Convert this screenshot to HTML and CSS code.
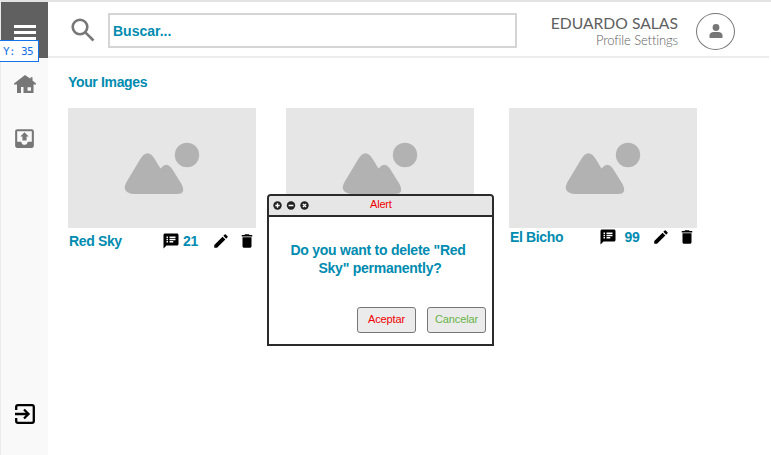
FILE: index.html
```html
<!DOCTYPE html>
<html lang="es">
<head>
<meta charset="utf-8">
<title>Your Images</title>
<link rel="stylesheet" href="styles.css">
</head>
<body>
<svg class="defs" aria-hidden="true">
  <symbol id="notes" viewBox="0 0 24 24"><path d="M20 2H4c-1.100 0-2 .9-2 2v18l4-4h14c1.100 0 2-.9 2-2V4c0-1.100-.9-2-2-2zM8 14H6v-2h2zm0-3H6V9h2zm0-3H6V6h2zm7 6h-5v-2h5zm3-3h-8V9h8zm0-3h-8V6h8z"/></symbol>
  <symbol id="edit" viewBox="0 0 24 24"><path d="M3 17.250V21h3.750L17.810 9.940l-3.750-3.750zM20.710 7.040a1 1 0 0 0 0-1.410l-2.340-2.340a1 1 0 0 0-1.410 0l-1.830 1.830 3.750 3.750z"/></symbol>
  <symbol id="trash" viewBox="0 0 24 24"><path d="M6 19c0 1.100.9 2 2 2h8c1.100 0 2-.9 2-2V7H6zM19 4h-3.500l-1-1h-5l-1 1H5v2h14z"/></symbol>
  <symbol id="photo" viewBox="0 0 188 120"><path d="M58.500 74L72 51.500Q79.500 39 87 51.500L92.500 60.500Q98 53.500 103.500 60L113.500 76Q118.500 86 109 86H65Q53 84 58.500 74Z"/><circle cx="119" cy="47" r="12.200"/></symbol>
</svg>
<div class="app">
  <aside class="sidebar">
    <button class="menu" aria-label="Menu"><i></i><i></i><i></i></button>
    <span class="tip">Y: 35</span>
    <svg class="home" viewBox="0 0 22 18"><path d="M11 0L16.500 3.800V2.200H18.500V5.400L22 8.500V9.500H19.500V18H9.500V12H7V18H3V9.500H0V8.500ZM13.500 12.300V15.700H17V12.300Z" fill-rule="evenodd"/></svg>
    <svg class="upload" viewBox="0 0 24 24"><path d="M16 10l-4-4-4 4h2v4h4v-4h2zm3-7H5c-1.100 0-2 .9-2 2v14c0 1.100.9 2 2 2h14c1.100 0 2-.9 2-2V5c0-1.100-.9-2-2-2zm0 12h-4c0 1.660-1.340 3-3 3s-3-1.340-3-3H5V5h14z"/></svg>
    <svg class="exit" viewBox="0 0 20 20"><path d="M1.200 6V3Q1.200 1.200 3 1.200H17Q18.800 1.200 18.800 3V17Q18.800 18.800 17 18.800H3Q1.200 18.800 1.200 17V14M0 10H13M9 5.500L13.500 10L9 14.500"/></svg>
  </aside>
  <div class="page">
    <header class="header">
      <svg class="search-icon" viewBox="0 0 24 24"><circle cx="9" cy="9" r="7.300"/><path d="M14.300 14.300L22.500 22.500"/></svg>
      <div class="search">Buscar...</div>
      <div class="profile"><span class="name">EDUARDO SALAS</span><span class="settings">Profile Settings</span></div>
      <div class="avatar"><svg viewBox="0 0 14 14"><circle cx="7" cy="3.500" r="3.400"/><path d="M.5 14V11.500Q.5 8.500 4 8H10Q13.500 8.500 13.500 11.500V14Z"/></svg></div>
    </header>
    <main>
      <h1>Your Images</h1>
      <div class="gallery">
        <article class="card">
          <svg class="photo"><use href="#photo"/></svg>
          <div class="info"><b class="title">Red Sky</b><svg class="ico"><use href="#notes"/></svg><b class="count">21</b><svg class="ico"><use href="#edit"/></svg><svg class="ico"><use href="#trash"/></svg></div>
        </article>
        <article class="card"><svg class="photo"><use href="#photo"/></svg></article>
        <article class="card wide">
          <svg class="photo"><use href="#photo"/></svg>
          <div class="info"><b class="title">El Bicho</b><svg class="ico"><use href="#notes"/></svg><b class="count">99</b><svg class="ico"><use href="#edit"/></svg><svg class="ico"><use href="#trash"/></svg></div>
        </article>
      </div>
    </main>
  </div>
</div>
<div class="dialog">
  <div class="titlebar">
    <svg class="controls" viewBox="0 0 36 9"><g class="disc"><circle cx="4.500" cy="4.500" r="4.200"/><circle cx="18" cy="4.500" r="4.200"/><circle cx="31.500" cy="4.500" r="4.200"/></g><path d="M2.300 4.500h4.400M4.500 2.300v4.400M15.600 4.500h4.800M29.900 2.900l3.200 3.200M33.100 2.900l-3.200 3.200"/></svg>
    <span>Alert</span>
  </div>
  <p>Do you want to delete "Red<br><span class="second">Sky" permanently?</span></p>
  <div class="actions"><button class="accept">Aceptar</button><button class="cancel">Cancelar</button></div>
</div>
</body>
</html>
```

FILE: styles.css
```css
* { box-sizing: border-box; }
body { margin: 0; background: #fff; font-family: "Liberation Sans", Arial, sans-serif; overflow: hidden; }
svg { display: block; flex: none; }
.defs { position: absolute; width: 0; height: 0; }
.app { display: flex; height: 455px; border-top: 2px solid #e3e3e3; border-left: 1px solid #ebebeb; }
.sidebar { position: relative; width: 47px; background: #f9f9f9; display: flex; flex-direction: column; align-items: center; flex: none; }
.menu { width: 47px; height: 56px; border: 0; padding: 4px 0 0; background: #606060; display: flex; flex-direction: column; align-items: center; justify-content: center; gap: 3px; flex: none; }
.menu i { width: 22px; height: 3px; background: #fff; }
.tip { position: absolute; left: -2px; top: 38px; width: 40px; height: 22px; border: 1px solid #1473e6; background: #fff; color: #1473e6; font: 11px/21px "DejaVu Sans Mono", monospace; letter-spacing: -.6px; padding-left: 3px; white-space: pre; }
.home { width: 22px; height: 18px; margin-top: 17px; fill: #777; }
.upload { width: 25px; height: 25px; margin-top: 33px; fill: #777; }
.exit { width: 20px; height: 20px; margin: auto 0 31px; fill: none; stroke: #000; stroke-width: 2.300; }
.page { flex: 1; }
.header { height: 56px; margin-right: 2px; border-bottom: 2px solid #ededed; display: flex; align-items: center; }
.search-icon { width: 24px; height: 24px; margin: 2px 0 0 23px; fill: none; stroke: #777; stroke-width: 2.600; }
.search { width: 409px; height: 35px; margin: 3px 0 0 13px; border: 2px solid #d5d5d5; padding-left: 3px; color: #008bb0; font-size: 14px; font-weight: bold; line-height: 32px; }
.profile { width: 161px; display: flex; flex-direction: column; align-items: flex-end; font-family: Lato, sans-serif; color: #606060; margin-top: 4px; }
.name { font-size: 15.700px; line-height: 17px; }
.settings { font-size: 13px; line-height: 16px; font-weight: 300; letter-spacing: -.12px; }
.avatar { width: 39px; height: 37px; margin: 4px 0 0 18px; border: 1px solid #777; border-radius: 50%; display: grid; place-items: center; }
.avatar svg { width: 14px; height: 14px; fill: #777; }
main { padding: 15px 0 0 20px; }
h1 { margin: 0; color: #008bb0; font-size: 14px; line-height: 18px; letter-spacing: -.35px; }
.gallery { display: flex; gap: 29.500px; margin-top: 17px; }
.card { width: 188px; }
.wide { margin-left: 6px; }
.photo { width: 188px; height: 120px; background: #e6e6e6; fill: #b2b2b2; }
.info { display: flex; align-items: center; height: 26px; color: #008bb0; font-size: 14px; }
.title { width: 94px; padding-left: 1px; letter-spacing: -.35px; }
.ico { width: 18px; height: 18px; fill: #000; }
.count { width: 32px; padding-left: 3px; letter-spacing: -.2px; }
.info .ico:nth-child(5) { margin-left: 7.500px; }
.wide .info { height: 18px; }
.wide .title { width: 89.500px; }
.wide .count { width: 35.500px; padding-left: 8px; }
.dialog { position: absolute; left: 267px; top: 194px; width: 227px; height: 152px; border: 2px solid #2b2b2b; border-radius: 4px 4px 0 0; background: #fff; }
.titlebar { height: 21px; display: flex; align-items: center; background: #e6e6e6; border-bottom: 2px solid #2b2b2b; border-radius: 3px 3px 0 0; color: #e00; font-size: 11px; padding-bottom: 1px; }
.controls { width: 36px; height: 9px; margin-left: 4px; fill: none; stroke: #fff; stroke-width: 1.400; }
.disc { fill: #222; stroke: none; }
.titlebar span { margin: -2px 0 0 61px; letter-spacing: -.2px; }
.dialog p { margin: 24px 0 0; padding-right: 5px; text-align: center; color: #008bb0; font-size: 14px; font-weight: bold; line-height: 18px; letter-spacing: -.25px; }
.second { padding-left: 4px; }
.actions { display: flex; justify-content: flex-end; gap: 11px; margin: 30px 6px 0 0; }
.actions button { width: 59px; height: 26px; padding: 0 0 3px; border: 1px solid #777; border-radius: 3px; background: #ebebeb; font: 11px "Liberation Sans", sans-serif; letter-spacing: -.15px; }
.actions .accept { color: #e00; }
.actions .cancel { color: #67b346; }
```
